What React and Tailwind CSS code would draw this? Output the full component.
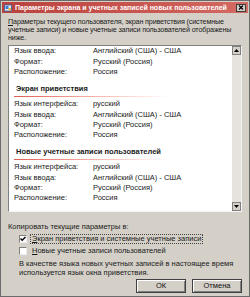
import React from "react"

const font = { fontFamily: '"Liberation Sans", Arial, sans-serif' }

const sections = [
  {
    title: null,
    rows: [
      ["Язык ввода:", "Английский (США) - США"],
      ["Формат:", "Русский (Россия)"],
      ["Расположение:", "Россия"],
    ],
  },
  {
    title: "Экран приветствия",
    rows: [
      ["Язык интерфейса:", "русский"],
      ["Язык ввода:", "Английский (США) - США"],
      ["Формат:", "Русский (Россия)"],
      ["Расположение:", "Россия"],
    ],
  },
  {
    title: "Новые учетные записи пользователей",
    rows: [
      ["Язык интерфейса:", "русский"],
      ["Язык ввода:", "Английский (США) - США"],
      ["Формат:", "Русский (Россия)"],
      ["Расположение:", "Россия"],
    ],
  },
]

function Row({ label, value }) {
  return (
    <div className="flex h-[10.3px] items-center leading-none whitespace-nowrap">
      <span className="w-[79px] shrink-0">{label}</span>
      <span>{value}</span>
    </div>
  )
}

function Checkbox({ checked }) {
  return (
    <div className="w-[8px] h-[8px] shrink-0 bg-white border border-t-[#808080] border-l-[#808080] border-b-[#eeeeee] border-r-[#eeeeee] flex items-center justify-center">
      {checked && (
        <svg width="6" height="6" viewBox="0 0 6 6">
          <path d="M0.5 2.5 L2.2 4.3 L5.5 1" stroke="#000" strokeWidth="1.4" fill="none" />
        </svg>
      )}
    </div>
  )
}

function Button({ children }) {
  return (
    <div className="w-[50px] h-[14px] bg-[#d4d0c8] border border-[#404040] flex items-center justify-center text-[7.5px] text-[#111] shadow-[inset_1px_1px_0_#ffffff,inset_-1px_-1px_0_#808080]">
      {children}
    </div>
  )
}

export default function App() {
  return (
    <div style={font} className="w-[250px] h-[297px] bg-[#d4d0c8] border border-[#6b6b6b] flex flex-col overflow-hidden text-[#1a1a1a]">
      {/* title bar */}
      <div className="h-[11px] mx-[1px] mt-[1px] bg-gradient-to-r from-[#b9423d] via-[#c8534e] to-[#d36a63] flex items-center px-[2px] gap-[3px]">
        <svg width="8" height="8" viewBox="0 0 8 8">
          <rect x="0.5" y="1" width="7" height="6" fill="#dfe8f4" stroke="#3a62a8" strokeWidth="0.8" />
          <rect x="1.5" y="2" width="3" height="3" fill="#3f7bd0" />
          <rect x="4.5" y="4" width="2.5" height="2.5" fill="#e9b23a" />
        </svg>
        <span className="text-white font-bold text-[7px] leading-none whitespace-nowrap">
          Параметры экрана и учетных записей новых пользователей
        </span>
        <div className="ml-auto w-[10px] h-[8px] bg-[#d4d0c8] border border-[#404040] flex items-center justify-center">
          <svg width="6" height="5" viewBox="0 0 6 5">
            <path d="M1 0.5 L5 4.5 M5 0.5 L1 4.5" stroke="#000" strokeWidth="1.2" />
          </svg>
        </div>
      </div>

      <div className="flex flex-col px-[7px] pt-[5px] text-[7.5px]">
        <p className="leading-[8px] whitespace-nowrap text-[7.2px] tracking-[-0.15px]">
          <span className="underline">П</span>араметры текущего пользователя, экран приветствия (системные
          <br />
          учетные записи) и новые учетные записи пользователей отображены
          <br />
          ниже.
        </p>

        {/* list box */}
        <div className="mt-[3px] h-[167px] flex bg-white border border-t-[#808080] border-l-[#808080] border-b-[#f4f4f4] border-r-[#f4f4f4] overflow-hidden">
          <div className="flex-1 overflow-hidden pl-[5px] pr-[8px]">
            <div>
              {sections.map((s, i) => (
                <div key={i}>
                  {s.title && (
                    <div className="pt-[7px]">
                      <div className="font-bold h-[10px] flex items-center pl-[2px]">{s.title}</div>
                      <div className="h-[1px] mt-[2px] mb-[2px] w-[155px] bg-gradient-to-r from-[#e05a52] to-white" />
                    </div>
                  )}
                  {s.rows.map((r, j) => (
                    <Row key={j} label={r[0]} value={r[1]} />
                  ))}
                </div>
              ))}
            </div>
          </div>
          {/* scrollbar */}
          <div className="w-[9px] flex flex-col bg-[#e6e3de]">
            <div className="h-[9px] bg-[#d4d0c8] border border-[#808080] flex items-center justify-center">
              <svg width="5" height="3" viewBox="0 0 5 3"><path d="M2.5 0 L5 3 L0 3 Z" fill="#000" /></svg>
            </div>
            <div className="flex-1" />
            <div className="h-[9px] bg-[#d4d0c8] border border-[#808080] flex items-center justify-center">
              <svg width="5" height="3" viewBox="0 0 5 3"><path d="M0 0 L5 0 L2.5 3 Z" fill="#000" /></svg>
            </div>
          </div>
        </div>

        <div className="mt-[10px] leading-[9px]">Копировать текущие параметры в:</div>
        <div className="pl-[11px] mt-[3px] flex flex-col gap-[3px]">
          <div className="flex items-center gap-[3px]">
            <Checkbox checked />
            <span className="border border-dotted border-[#444] px-[1px] leading-[8px]">
              <span className="underline">Э</span>кран приветствия и системные учетные записи
            </span>
          </div>
          <div className="flex items-center gap-[3px]">
            <Checkbox />
            <span className="px-[2px] leading-[8px]">
              <span className="underline">Н</span>овые учетные записи пользователей
            </span>
          </div>
          <p className="leading-[9px] mt-[1px]">
            В качестве языка новых учетных записей в настоящее время используется язык окна приветствия.
          </p>
        </div>

        <div className="flex justify-end gap-[6px] mt-[2px] pr-[0px]">
          <Button>ОК</Button>
          <Button>Отмена</Button>
        </div>
      </div>
    </div>
  )
}
